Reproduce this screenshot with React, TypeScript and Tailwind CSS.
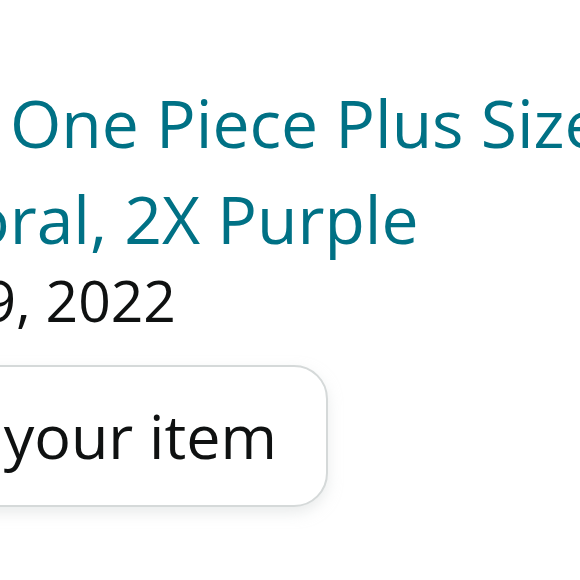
export default function App() {
  return (
    <div
      className="w-[580px] h-[580px] overflow-hidden bg-white"
      style={{ fontFamily: '"Open Sans", "Noto Sans", sans-serif' }}
    >
      <div className="flex flex-col pt-[74px]">
        <div className="flex whitespace-nowrap text-[#007185] text-[66px] leading-[96px]">
          <span className="w-[10px] shrink-0 flex justify-end">Women&apos;s&nbsp;</span>
          <span>One Piece Plus Size Swimsuit</span>
        </div>
        <div className="flex whitespace-nowrap text-[#007185] text-[66px] leading-[96px] ml-[-30px]">
          <span className="w-0 shrink-0 flex justify-end">Tummy Control Fl</span>
          <span>oral, 2X Purple</span>
        </div>
        <div className="flex whitespace-nowrap text-[#0F1111] text-[57px] leading-[69px]">
          <span className="w-[16px] shrink-0 flex justify-end">Return window closed on Jul 9</span>
          <span>, 2022</span>
        </div>
        <div className="mt-[30px] ml-[-300px] w-[628px] h-[142px] rounded-[34px] border-2 border-[#D5D9D9] bg-white shadow-[0_6px_14px_rgba(213,217,217,0.5)] flex items-center justify-end pr-[49px] text-[#0F1111] text-[61px] whitespace-nowrap">
          View your item
        </div>
      </div>
    </div>
  );
}
